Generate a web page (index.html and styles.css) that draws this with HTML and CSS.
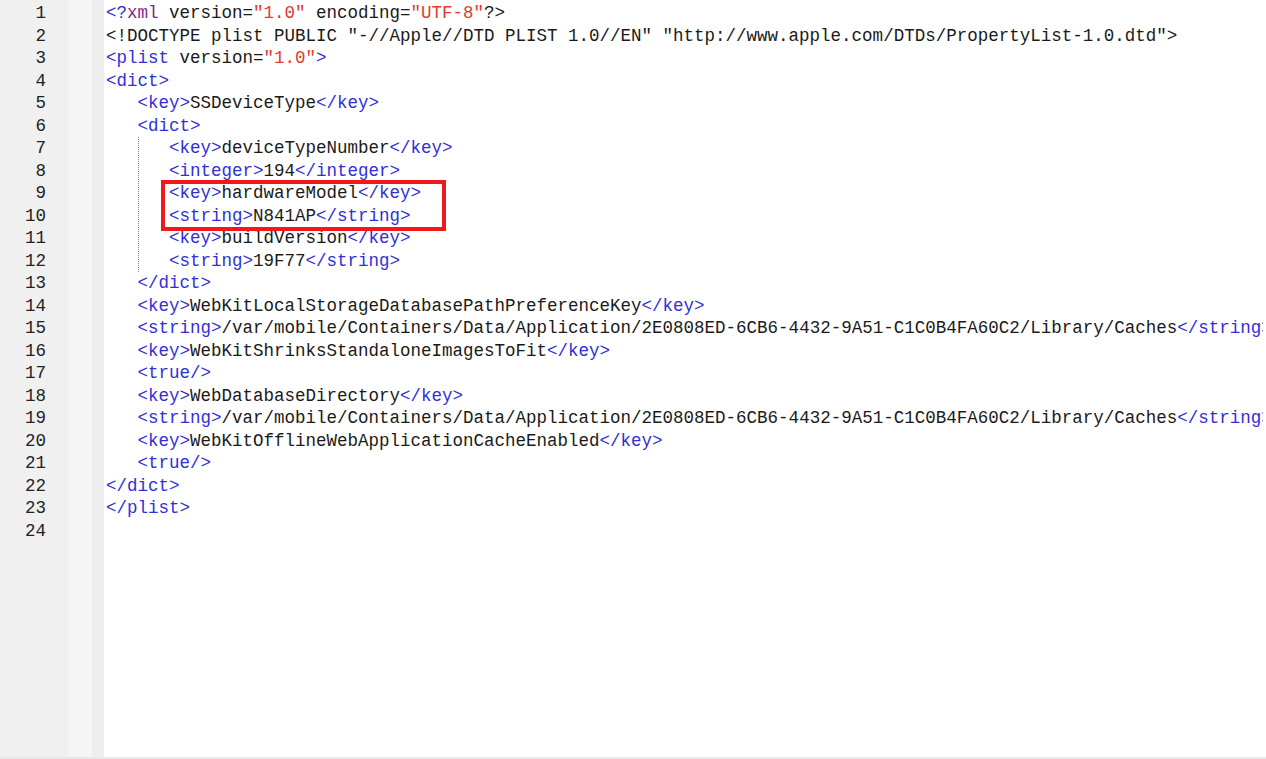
FILE: index.html
```html
<!DOCTYPE html>
<html lang="en">
<head>
  <meta charset="UTF-8">
  <title>Info.plist</title>
  <link rel="stylesheet" href="styles.css">
</head>
<body>
  <div class="editor">
    <div class="gutter">
      <div>1</div><div>2</div><div>3</div><div>4</div><div>5</div><div>6</div>
      <div>7</div><div>8</div><div>9</div><div>10</div><div>11</div><div>12</div>
      <div>13</div><div>14</div><div>15</div><div>16</div><div>17</div><div>18</div>
      <div>19</div><div>20</div><div>21</div><div>22</div><div>23</div><div>24</div>
    </div>
    <div class="fold"></div>
    <div class="margin"></div>
    <div class="code">
      <div class="line"><span class="t">&lt;?</span><span class="pi">xml</span> version=<span class="v">"1.0"</span> encoding=<span class="v">"UTF-8"</span>?&gt;</div>
      <div class="line">&lt;!DOCTYPE plist PUBLIC "-//Apple//DTD PLIST 1.0//EN" "http://www.apple.com/DTDs/PropertyList-1.0.dtd"&gt;</div>
      <div class="line"><span class="t">&lt;plist</span> version=<span class="v">"1.0"</span><span class="t">&gt;</span></div>
      <div class="line"><span class="t">&lt;dict&gt;</span></div>
      <div class="line">   <span class="t">&lt;key&gt;</span>SSDeviceType<span class="t">&lt;/key&gt;</span></div>
      <div class="line">   <span class="t">&lt;dict&gt;</span></div>
      <div class="block">
        <div class="line"><span class="t">&lt;key&gt;</span>deviceTypeNumber<span class="t">&lt;/key&gt;</span></div>
        <div class="line"><span class="t">&lt;integer&gt;</span>194<span class="t">&lt;/integer&gt;</span></div>
        <div class="line"><span class="t">&lt;key&gt;</span>hardwareModel<span class="t">&lt;/key&gt;</span></div>
        <div class="line"><span class="t">&lt;string&gt;</span>N841AP<span class="t">&lt;/string&gt;</span></div>
        <div class="line"><span class="t">&lt;key&gt;</span>buildVersion<span class="t">&lt;/key&gt;</span></div>
        <div class="line"><span class="t">&lt;string&gt;</span>19F77<span class="t">&lt;/string&gt;</span></div>
      </div>
      <div class="line">   <span class="t">&lt;/dict&gt;</span></div>
      <div class="line">   <span class="t">&lt;key&gt;</span>WebKitLocalStorageDatabasePathPreferenceKey<span class="t">&lt;/key&gt;</span></div>
      <div class="line">   <span class="t">&lt;string&gt;</span>/var/mobile/Containers/Data/Application/2E0808ED-6CB6-4432-9A51-C1C0B4FA60C2/Library/Caches<span class="t">&lt;/string&gt;</span></div>
      <div class="line">   <span class="t">&lt;key&gt;</span>WebKitShrinksStandaloneImagesToFit<span class="t">&lt;/key&gt;</span></div>
      <div class="line">   <span class="t">&lt;true/&gt;</span></div>
      <div class="line">   <span class="t">&lt;key&gt;</span>WebDatabaseDirectory<span class="t">&lt;/key&gt;</span></div>
      <div class="line">   <span class="t">&lt;string&gt;</span>/var/mobile/Containers/Data/Application/2E0808ED-6CB6-4432-9A51-C1C0B4FA60C2/Library/Caches<span class="t">&lt;/string&gt;</span></div>
      <div class="line">   <span class="t">&lt;key&gt;</span>WebKitOfflineWebApplicationCacheEnabled<span class="t">&lt;/key&gt;</span></div>
      <div class="line">   <span class="t">&lt;true/&gt;</span></div>
      <div class="line"><span class="t">&lt;/dict&gt;</span></div>
      <div class="line"><span class="t">&lt;/plist&gt;</span></div>
      <div class="line"> </div>
      <div class="highlight"></div>
    </div>
  </div>
</body>
</html>
```

FILE: styles.css
```css
/* Editor */
body {
  margin: 0;
  padding: 0;
  background-color: #ffffff;
  overflow: hidden;
}

.editor {
  display: flex;
  height: 757px;
  border-bottom: 2px solid #e8e8e8;
  font-family: 'Liberation Mono', 'Courier New', monospace;
  font-size: 17.5px;
  line-height: 22.5px;
  color: #1a1a1a;
}

/* Radnummer */
.gutter {
  width: 46px;
  padding: 2px 22px 0 0;
  background-color: #f0f0f0;
  text-align: right;
  color: #222222;
}

.fold {
  width: 24px;
  background-color: #f5f5f5;
  background-image: repeating-conic-gradient(#f1f1f1 0 25%, #f9f9f9 0 50%);
  background-size: 2px 2px;
}

.margin {
  width: 12px;
  background-color: #eeeeee;
}

/* Kod */
.code {
  position: relative;
  flex: 1;
  padding: 2px 0 0 2px;
  margin-right: 3px;
  overflow: hidden;
}

.line {
  white-space: pre;
  height: 22.5px;
}

.block {
  margin-left: 3ch;
  border-left: 1px dotted #8a8a8a;
  padding-left: calc(3ch - 1px);
}

.t {
  color: #3030d8;
}

.v {
  color: #e2382f;
}

.pi {
  color: #8a1c8a;
}

/* Markering */
.highlight {
  position: absolute;
  left: 57px;
  top: 180px;
  width: 277px;
  height: 43px;
  border: 4px solid #f01818;
}
```
